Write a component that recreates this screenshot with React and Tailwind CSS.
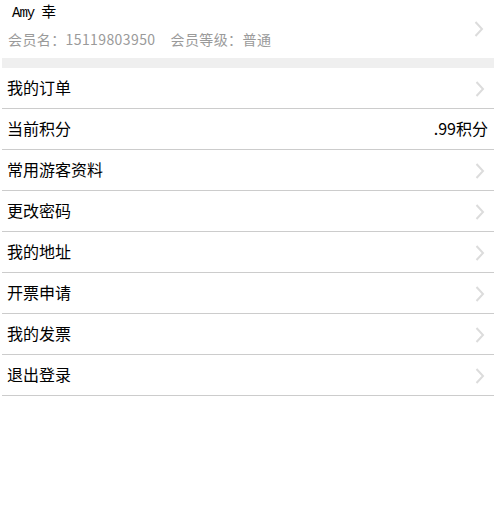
const Chevron = () => (
  <svg width="10" height="16" viewBox="0 0 10 16" className="shrink-0">
    <polyline points="1.5,1 8,8 1.5,15" fill="none" stroke="#dcdcdc" strokeWidth="2" />
  </svg>
);

const rows = [
  { label: "我的订单" },
  { label: "当前积分", value: ".99积分" },
  { label: "常用游客资料" },
  { label: "更改密码" },
  { label: "我的地址" },
  { label: "开票申请" },
  { label: "我的发票" },
  { label: "退出登录" },
];

export default function App() {
  return (
    <div
      className="w-[497px] h-[523px] bg-white px-[2px]"
      style={{ fontFamily: '"Noto Sans CJK SC", "Noto Sans", sans-serif' }}
    >
      <div className="flex items-center h-[58px] pr-[11px]">
        <div className="flex-1 pl-[6px] self-start">
          <div className="flex items-baseline h-[22px] pl-[4px] text-black">
            <span className="font-['Liberation_Mono',monospace] text-[14px] tracking-[-1px]">Amy</span>
            <span className="text-[15px] ml-[7px] leading-[22px]">幸</span>
          </div>
          <div className="text-[14px] leading-[20px] text-[#9a9a9a] mt-[7px] tracking-[0.4px]">
            <span>会员名：15119803950</span>
            <span className="ml-[15px]">会员等级：普通</span>
          </div>
        </div>
        <Chevron />
      </div>
      <div className="h-[10px] bg-[#efefef] w-[492px]" />
      <div className="w-[492px]">
        {rows.map((r) => (
          <div
            key={r.label}
            className="flex items-center justify-between h-[41px] border-b border-[#cccccc] pl-[5px] pr-[9px] pt-[1px]"
          >
            <span className="text-[16px] text-black pb-[4px]">{r.label}</span>
            {r.value ? (
              <span className="text-[16px] text-black -mr-[3px] pb-[4px]">{r.value}</span>
            ) : (
              <Chevron />
            )}
          </div>
        ))}
      </div>
    </div>
  );
}
